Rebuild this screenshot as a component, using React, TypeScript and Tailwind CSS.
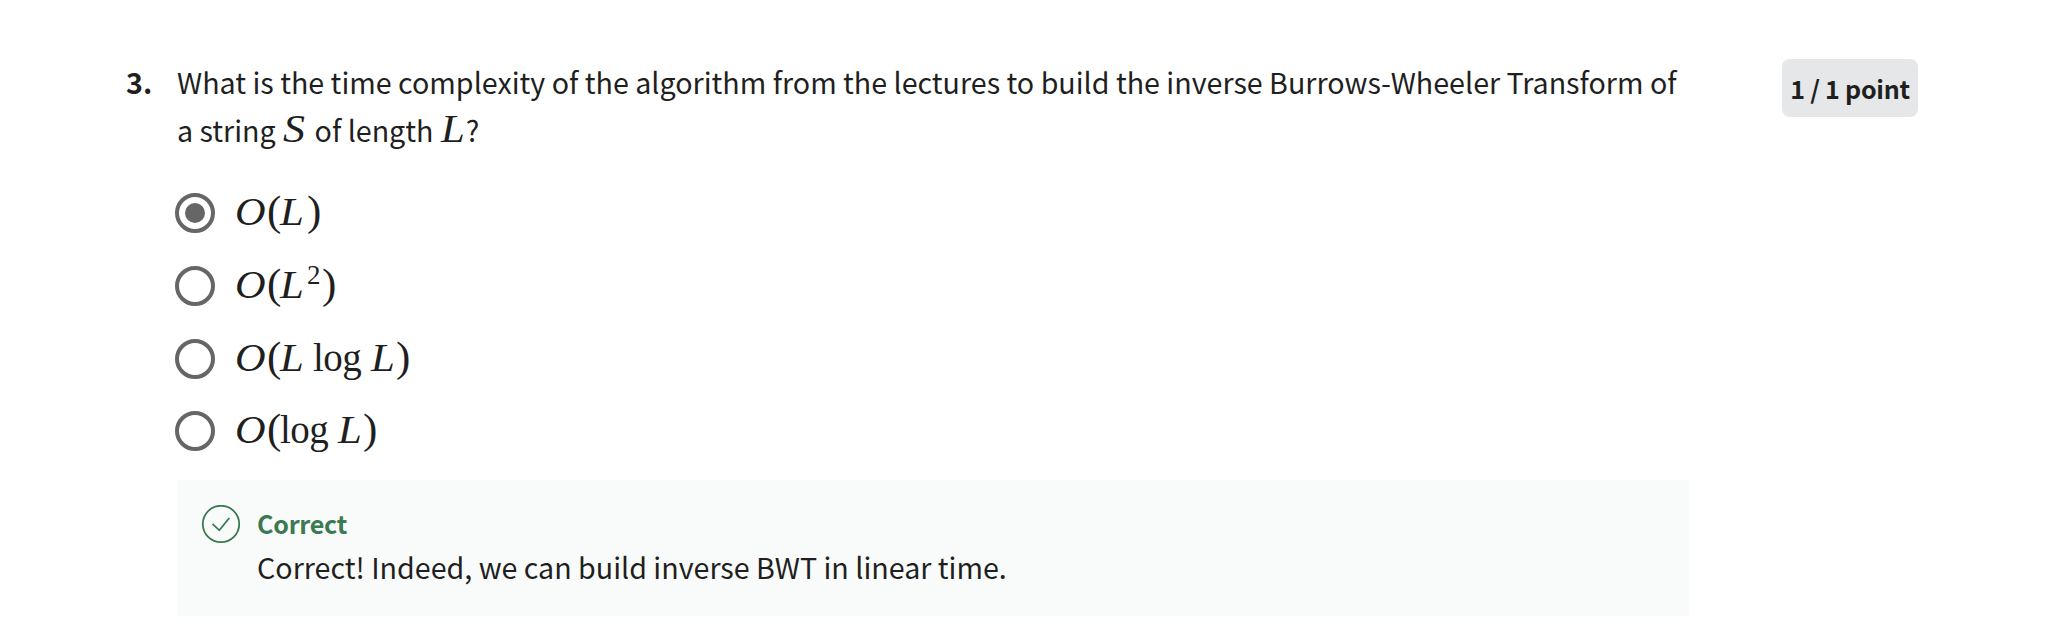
import type { ReactNode } from "react";

const SANS = "font-['Noto_Sans_CJK_SC','Noto_Sans',sans-serif]";

function Italic({ children, className = "" }: { children: ReactNode; className?: string }) {
  return (
    <i className={`inline-block origin-left font-['Liberation_Serif',serif] text-[40px] leading-none ${className}`}>{children}</i>
  );
}

function Paren({ children }: { children: ReactNode }) {
  return <span className="inline-block w-[13px] text-[43px]">{children}</span>;
}

function O() {
  return <i className="w-[32px] origin-left scale-x-106">O</i>;
}

function L({ className = "w-[27px]" }: { className?: string }) {
  return <i className={`origin-left scale-x-107 ${className}`}>L</i>;
}

function Log() {
  return <span className="mr-[8px] inline-block w-[50px] text-[39px] tracking-[-0.5px]">log</span>;
}

function Option({ selected = false, className = "", children }: { selected?: boolean; className?: string; children: ReactNode }) {
  return (
    <label className={`flex items-start ${className}`}>
      <span className="flex size-10 shrink-0 items-center justify-center rounded-full border-4 border-[#666666]">
        {selected && <span className="size-5 rounded-full bg-[#666666]" />}
      </span>
      <span className="ml-5 flex h-10 items-baseline font-['Liberation_Serif',serif] text-[40px] leading-[35px] whitespace-nowrap">
        {children}
      </span>
    </label>
  );
}

export default function App() {
  return (
    <main className={`flex h-[628px] w-[2072px] items-start bg-white text-[#1f1f1f] ${SANS}`}>
      <div className="w-[177px] shrink-0 pt-[58px] pl-[126px] text-[28.65px] leading-[48px] font-bold">3.</div>
      <section className="w-[1512px] shrink-0 pt-[58px]">
        <div className="text-[28.65px] leading-[48px] whitespace-nowrap">
          <p>What is the time complexity of the algorithm from the lectures to build the inverse Burrows-Wheeler Transform of</p>
          <p className="h-12">
            a string <Italic className="ml-px w-[25px] scale-x-110">S</Italic> of length <Italic className="ml-px w-[25px] scale-x-107">L</Italic>?
          </p>
        </div>
        <div className="mt-[39px] -ml-0.5 flex flex-col">
          <Option selected className="h-[73px]">
            <O /><Paren>(</Paren><L /><Paren>)</Paren>
          </Option>
          <Option className="h-[73px]">
            <O /><Paren>(</Paren><L />
            <span className="relative -top-[14px] w-[15px] text-[27px] leading-none">2</span><Paren>)</Paren>
          </Option>
          <Option className="h-[72px]">
            <O /><Paren>(</Paren><L className="w-[33px]" /><Log /><L className="w-[25px]" /><Paren>)</Paren>
          </Option>
          <Option className="h-[69px]">
            <O /><Paren>(</Paren><Log /><L className="w-[25px]" /><Paren>)</Paren>
          </Option>
        </div>
        <div className="flex h-[136px] items-start bg-[#f9fbfa] pt-[24px] pl-[24px]">
          <svg className="mt-px size-[40px] shrink-0" viewBox="0 0 40 40" fill="none" stroke="#3a7a50" strokeWidth="1.8">
            <circle cx="20" cy="19" r="18.2" />
            <path d="M11.5 18.8 18.3 25.3 28.3 13" />
          </svg>
          <div className="ml-4 pt-px">
            <div className="text-[25.07px] leading-[36px] font-bold tracking-[-0.25px] text-[#3a7a50]">Correct</div>
            <p className="mt-[2px] text-[28.65px] leading-[48px] whitespace-nowrap">Correct! Indeed, we can build inverse BWT in linear time.</p>
          </div>
        </div>
      </section>
      <div className="mt-[59px] ml-[93px] flex h-[58px] w-[136px] items-center justify-center rounded-lg bg-[#e5e7e8] text-[25.07px] leading-[40px] font-bold tracking-[-0.25px] whitespace-nowrap">
        1 / 1 point
      </div>
    </main>
  );
}
